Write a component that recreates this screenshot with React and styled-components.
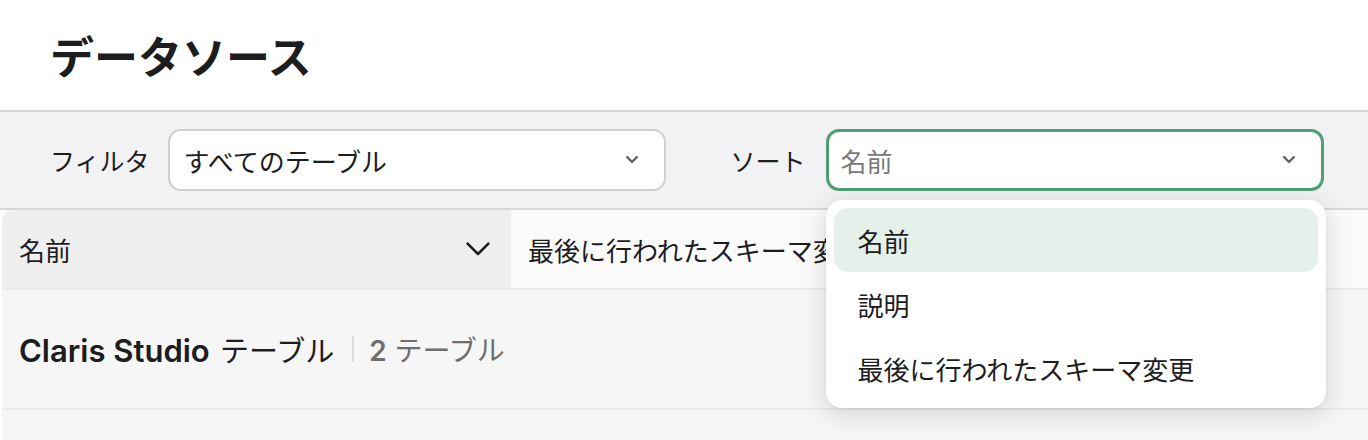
import styled, { createGlobalStyle } from "styled-components";

const GlobalStyle = createGlobalStyle`
  body {
    margin: 0;
    background: #ffffff;
    font-family: "Inter", "Noto Sans CJK JP", sans-serif;
    color: #1d1d1f;
  }
`;

const Chevron = ({ size = 12, color = "#666", weight = 2.4 }) => (
  <svg width={size} height={size * 0.6} viewBox="0 0 20 12" fill="none">
    <path
      d="M2 2l8 8 8-8"
      stroke={color}
      strokeWidth={weight * (20 / size)}
      strokeLinecap="round"
      strokeLinejoin="round"
    />
  </svg>
);

const sortOptions = ["名前", "説明", "最後に行われたスキーマ変更"];

function App() {
  return (
    <Page>
      <GlobalStyle />
      <Header>
        <Title>データソース</Title>
      </Header>

      <Toolbar>
        <Field>
          <Label>フィルタ</Label>
          <Select>
            <SelectText>すべてのテーブル</SelectText>
            <Chevron />
          </Select>
        </Field>
        <Field $gap={20}>
          <Label>ソート</Label>
          <SelectWrap>
            <Select $focused>
              <SelectText $placeholder>名前</SelectText>
              <Chevron />
            </Select>
            <Menu>
              {sortOptions.map((opt, i) => (
                <MenuItem key={opt} $active={i === 0}>
                  {opt}
                </MenuItem>
              ))}
            </Menu>
          </SelectWrap>
        </Field>
      </Toolbar>

      <Table>
        <HeadRow>
          <HeadCell $sorted>
            名前
            <Chevron size={26} color="#1d1d1f" weight={2.6} />
          </HeadCell>
          <HeadCell>最後に行われたスキーマ変更</HeadCell>
        </HeadRow>
        <GroupRow>
          <GroupName>
            <b>Claris Studio</b> テーブル
          </GroupName>
          <Divider />
          <GroupCount>
            <b>2</b> テーブル
          </GroupCount>
        </GroupRow>
        <EmptyRow />
      </Table>
    </Page>
  );
}

export default App;

const Page = styled.div`
  width: 1368px;
  height: 440px;
  overflow: hidden;
`;

const Header = styled.header`
  height: 110px;
  display: flex;
  align-items: center;
  padding-left: 50px;
`;

const Title = styled.h1`
  margin: 0;
  font-size: 44px;
  font-weight: 700;
  letter-spacing: 0;
`;

const Toolbar = styled.div`
  display: flex;
  align-items: center;
  gap: 65px;
  height: 96px;
  padding-left: 50px;
  background: #f2f2f4;
  border-top: 2px solid #d8d8da;
  border-bottom: 2px solid #d8d8da;
`;

const Field = styled.div`
  display: flex;
  align-items: center;
  gap: ${(p) => p.$gap || 18}px;
`;

const Label = styled.span`
  font-size: 25px;
  color: #1d1d1f;
`;

const SelectWrap = styled.div`
  position: relative;
`;

const Select = styled.div`
  box-sizing: border-box;
  width: 498px;
  height: 62px;
  display: flex;
  align-items: center;
  justify-content: space-between;
  padding: 0 26px 0 ${(p) => (p.$focused ? 12 : 14)}px;
  background: #ffffff;
  border-radius: 13px;
  border: ${(p) => (p.$focused ? "3px solid #4f9f72" : "2px solid #cfcfd1")};
`;

const SelectText = styled.span`
  font-size: 26px;
  color: ${(p) => (p.$placeholder ? "#7a7a7a" : "#1d1d1f")};
`;

const Menu = styled.div`
  position: absolute;
  top: 71px;
  left: 0;
  z-index: 5;
  box-sizing: border-box;
  width: 500px;
  padding: 8px;
  background: #ffffff;
  border-radius: 16px;
  box-shadow: 0 6px 28px rgba(0, 0, 0, 0.14), 0 1px 4px rgba(0, 0, 0, 0.06);
`;

const MenuItem = styled.div`
  height: 64px;
  display: flex;
  align-items: center;
  padding-left: 24px;
  font-size: 26px;
  border-radius: 14px;
  color: #1d1d1f;
  background: ${(p) => (p.$active ? "#e6f0eb" : "transparent")};
`;

const Table = styled.div`
  margin-left: 2px;
  background: #f6f6f6;
  border-top-left-radius: 12px;
  overflow: hidden;
`;

const HeadRow = styled.div`
  display: grid;
  grid-template-columns: 509px 1fr;
  height: 78px;
  border-bottom: 2px solid #ebebeb;
`;

const HeadCell = styled.div`
  display: flex;
  align-items: center;
  justify-content: space-between;
  padding: 0 20px 0 17px;
  font-size: 26px;
  background: ${(p) => (p.$sorted ? "#efefef" : "#fafafa")};
`;

const GroupRow = styled.div`
  display: flex;
  align-items: center;
  height: 118px;
  padding-left: 17px;
  border-bottom: 2px solid #ebebeb;
`;

const GroupName = styled.span`
  font-size: 29px;
  color: #1d1d1f;

  b {
    font-size: 31px;
    font-weight: 600;
    margin-right: 2px;
  }
`;

const Divider = styled.span`
  width: 2px;
  height: 26px;
  margin: 0 15px 0 18px;
  background: #dddddd;
`;

const GroupCount = styled.span`
  font-size: 28px;
  color: #6e6e6e;

  b {
    font-weight: 600;
  }
`;

const EmptyRow = styled.div`
  height: 60px;
`;
